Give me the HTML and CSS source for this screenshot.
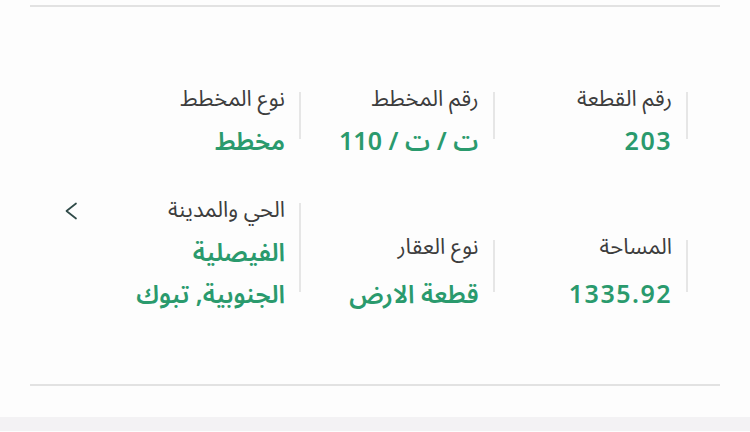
FILE: index.html
```html
<!DOCTYPE html>
<html lang="ar" dir="rtl">
<head>
    <meta charset="UTF-8">
    <meta name="viewport" content="width=device-width, initial-scale=1.0">
    <title>بيانات القطعة</title>
    <link rel="stylesheet" href="styles.css">
</head>
<body>
    <div class="card">
        <div class="details">
            <div class="field">
                <div class="field-body">
                    <div class="label">رقم القطعة</div>
                    <div class="value num">203</div>
                </div>
            </div>
            <div class="field">
                <div class="field-body">
                    <div class="label">رقم المخطط</div>
                    <div class="value">ت / ت / 110</div>
                </div>
            </div>
            <div class="field">
                <div class="field-body">
                    <div class="label">نوع المخطط</div>
                    <div class="value">مخطط</div>
                </div>
            </div>
            <div class="spacer"></div>

            <div class="field">
                <div class="field-body">
                    <div class="label tall">المساحة</div>
                    <div class="value num">1335.92</div>
                </div>
            </div>
            <div class="field">
                <div class="field-body">
                    <div class="label tall">نوع العقار</div>
                    <div class="value">قطعة الارض</div>
                </div>
            </div>
            <div class="field">
                <div class="field-body">
                    <div class="label">الحي والمدينة</div>
                    <div class="value">الفيصلية</div>
                    <div class="value">الجنوبية, تبوك</div>
                </div>
            </div>
            <div class="more">
                <svg width="14" height="18" viewBox="0 0 14 18" fill="none">
                    <path d="M12 1.5 L2.5 9 L12 16.5" stroke="#2f4a48" stroke-width="1.7" stroke-linecap="round" stroke-linejoin="round"/>
                </svg>
            </div>
        </div>
    </div>
    <div class="footer"></div>
</body>
</html>
```

FILE: styles.css
```css
body {
    margin: 0;
    background-color: #fdfdfd;
    font-family: "Noto Sans", "Noto Sans Arabic", "DejaVu Sans", sans-serif;
    color: #3d3d3d;
}

.card {
    margin: 5px 30px 0;
    padding: 68px 0 70px;
    border-top: 2px solid #e2e2e2;
    border-bottom: 2px solid #e2e2e2;
}

.details {
    display: grid;
    grid-template-columns: 193.5px 193.5px 193.5px 1fr;
    row-gap: 25px;
    padding-right: 32px;
    align-items: end;
}

.field {
    display: flex;
    align-items: stretch;
}

.field::before {
    content: "";
    width: 2px;
    background-color: #e6e6e6;
    margin: 17px 0 22px;
}

.field-body {
    padding-right: 14px;
}

.label {
    font-size: 22px;
    line-height: 44px;
    color: #3d3d3d;
}

.label.tall {
    padding-bottom: 5px;
}

.value {
    font-size: 25px;
    line-height: 42px;
    font-weight: 600;
    color: #2a9a6d;
}

.value.num {
    letter-spacing: 1.5px;
}

.more {
    align-self: start;
    padding: 16px 0 0 34px;
    display: flex;
    justify-content: flex-end;
}

.footer {
    margin-top: 31px;
    height: 14px;
    background-color: #f3f2f4;
}
```
